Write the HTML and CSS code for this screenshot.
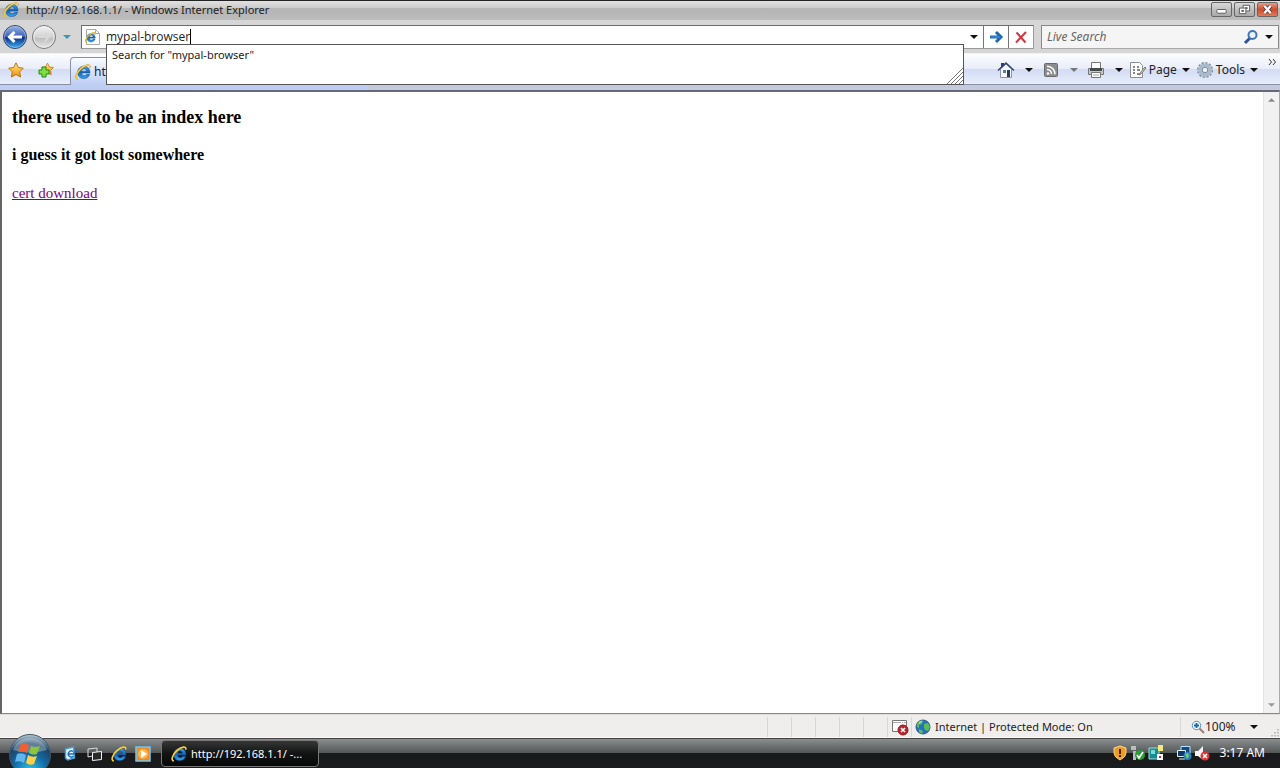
FILE: index.html
```html
<!DOCTYPE html>
<html lang="en">
<head>
<meta charset="utf-8">
<title>http://192.168.1.1/ - Windows Internet Explorer</title>
<link rel="stylesheet" href="styles.css">
</head>
<body>
<svg class="defs" aria-hidden="true">
  <defs>
    <linearGradient id="blue" x1="0" y1="0" x2="0" y2="1"><stop offset="0" stop-color="#3fa6e6"/><stop offset=".5" stop-color="#1565bd"/><stop offset="1" stop-color="#2fa8ea"/></linearGradient>
    <linearGradient id="back" x1="0" y1="0" x2="0" y2="1"><stop offset="0" stop-color="#9db6e8"/><stop offset=".48" stop-color="#3d62b8"/><stop offset=".52" stop-color="#072b85"/><stop offset="1" stop-color="#42b6f5"/></linearGradient>
    <linearGradient id="fwd" x1="0" y1="0" x2="0" y2="1"><stop offset="0" stop-color="#f4f4f4"/><stop offset=".5" stop-color="#d2d2d2"/><stop offset=".55" stop-color="#bdbdbd"/><stop offset="1" stop-color="#e9e9e9"/></linearGradient>
    <linearGradient id="gold" x1="0" y1="0" x2="0" y2="1"><stop offset="0" stop-color="#fff07a"/><stop offset="1" stop-color="#f28a10"/></linearGradient>
    <radialGradient id="orb" cx=".5" cy=".9" r=".9"><stop offset="0" stop-color="#35c9ee"/><stop offset=".45" stop-color="#126aa5"/><stop offset=".75" stop-color="#1d4568"/><stop offset="1" stop-color="#bcd0de"/></radialGradient>
  </defs>
  <symbol id="ie" viewBox="0 0 16 16">
    <path fill-rule="evenodd" d="M9 2.200c3.700 0 6 2.600 6 6.800H6.600c.2 1.700 1.200 2.600 2.700 2.600 1.100 0 1.900-.5 2.400-1.300h3c-.8 2.600-2.900 4.300-5.800 4.300-3.800 0-6.200-2.500-6.200-6.200S5.300 2.200 9 2.200zM6.700 7.200h4.800C11.300 5.700 10.400 4.900 9 4.900S6.900 5.800 6.700 7.200z" fill="url(#blue)" stroke="#0d4a96" stroke-width=".5"/>
    <path d="M2.800 15C-.4 14.600 1.400 8.500 6 4.500 10.200.8 15.700-.4 14.700 3.600" fill="none" stroke="#b98d1c" stroke-width="1.700"/>
    <path d="M2.800 15C-.4 14.600 1.400 8.500 6 4.500 10.200.8 15.700-.4 14.700 3.600" fill="none" stroke="#ffd640" stroke-width="1.200"/>
  </symbol>
  <symbol id="star" viewBox="0 0 16 16"><path d="M8 .8l2.300 4.700 5 .7-3.600 3.600.9 5.200L8 12.500 3.400 15l.9-5.200L.7 6.200l5-.7z" fill="url(#gold)" stroke="#b87716" stroke-linejoin="round"/></symbol>
  <symbol id="down" viewBox="0 0 8 4"><path d="M0 0h8L4 4z" fill="currentColor"/></symbol>
</svg>

<header class="titlebar">
  <svg class="i16"><use href="#ie"/></svg>
  <span class="window-title">http://192.168.1.1/ - Windows Internet Explorer</span>
  <div class="window-buttons">
    <button aria-label="Minimize"><svg viewBox="0 0 20 14"><rect x="5" y="7" width="10" height="4" rx="1" fill="#fff" stroke="#555"/></svg></button>
    <button aria-label="Restore"><svg viewBox="0 0 20 14"><path d="M8.500 2.500h7v6h-7zM11 5h2v1h-2z" fill="#fff" fill-rule="evenodd" stroke="#555"/><path d="M4.500 5.500h7v6h-7zM7 8h2v1H7z" fill="#fff" fill-rule="evenodd" stroke="#555"/></svg></button>
    <button class="close" aria-label="Close"><svg viewBox="0 0 20 14"><path d="M6.500 3l7 8M13.500 3l-7 8" stroke="#643030" stroke-width="4"/><path d="M6.500 3l7 8M13.500 3l-7 8" stroke="#fff" stroke-width="2.500"/></svg></button>
  </div>
</header>

<nav class="navbar">
  <div class="travel">
    <button aria-label="Back"><svg viewBox="0 0 26 26"><circle cx="13" cy="13" r="11.500" fill="url(#back)" stroke="#3a4660"/><circle cx="13" cy="13" r="10.500" fill="none" stroke="#a8c5ee" stroke-opacity=".6"/><path d="M20 13H8M12.500 8L7.500 13l5 5" fill="none" stroke="#fff" stroke-width="3"/></svg></button>
    <button aria-label="Forward"><svg viewBox="0 0 26 26"><circle cx="13" cy="13" r="11.500" fill="url(#fwd)" stroke="#777"/><circle cx="13" cy="13" r="10.200" fill="none" stroke="#eee"/><path d="M7 13h11M14 9l4 4-4 4" fill="none" stroke="#d8d8d8" stroke-width="2"/></svg></button>
    <button class="recent" aria-label="Recent pages"><svg class="down"><use href="#down"/></svg></button>
  </div>
  <div class="address">
    <svg class="page-icon" viewBox="0 0 18 18"><path d="M3.500 1.500h9l4 4v11h-13z" fill="#fff" stroke="#aaa"/><path d="M12.500 1.500v4h4" fill="none" stroke="#aaa"/><use href="#ie" x="2" y="4" width="11" height="11"/></svg>
    <input class="address-input" aria-label="Address" value="mypal-browser">
    <span class="caret"></span>
    <button class="address-drop" aria-label="Show addresses"><svg class="down"><use href="#down"/></svg></button>
    <button class="address-btn" aria-label="Go"><svg class="i16" viewBox="0 0 16 16"><path d="M2 8h10M8 3l5 5-5 5" fill="none" stroke="#1d68b0" stroke-width="3"/><path d="M3 8h9" stroke="#4b9ae0"/></svg></button>
    <button class="address-btn" aria-label="Stop"><svg class="i16" viewBox="0 0 16 16"><path d="M3.500 3.500l9 10M13 3L3 13.500" fill="none" stroke="#cf3942" stroke-width="2"/></svg></button>
    <div class="suggestions">
      <span>Search for "mypal-browser"</span>
      <svg class="grip" viewBox="0 0 16 16"><path d="M0 16L16 0M4 16L16 4M8 16l8-8M12 16l4-4" stroke="#777"/></svg>
    </div>
  </div>
  <div class="search">
    <input aria-label="Search" placeholder="Live Search">
    <button aria-label="Search the web"><svg class="i16" viewBox="0 0 16 16"><path d="M7 9l-5 5" stroke="#2d5597" stroke-width="3"/><circle cx="9.500" cy="6" r="4" fill="#e6f3ff" stroke="#4273b5" stroke-width="2"/></svg></button>
    <button aria-label="Search options"><svg class="down"><use href="#down"/></svg></button>
  </div>
</nav>

<div class="tabbar">
  <div class="favorites">
    <button aria-label="Favorites"><svg class="i16"><use href="#star"/></svg></button>
    <button aria-label="Add to favorites"><svg class="i16" viewBox="0 0 16 16"><use href="#star" x="3" y="0" width="13" height="14"/><path d="M4 5h4v3h3v4H8v3H4v-3H1V8h3z" fill="#7ee03c" stroke="#24881a"/></svg></button>
  </div>
  <button class="tab"><svg class="i16"><use href="#ie"/></svg><span>http://192.168.1.1/</span></button>
  <div class="commands">
    <button aria-label="Home"><svg class="i18" viewBox="0 0 18 18"><path d="M4 2h3v4H4z" fill="#293f78"/><path d="M3.500 8v8.500h11V8L9 3z" fill="#f5f7fb" stroke="#8a94ad"/><path d="M1 9.500L9 2l8 7.500" fill="none" stroke="#34477c" stroke-width="1.600"/><path d="M6 9h3v3H6z" fill="#52829a"/><path d="M10 9h3v7h-3z" fill="#243e5d"/></svg></button>
    <button class="menu" aria-label="Home menu"><svg class="down"><use href="#down"/></svg></button>
    <button aria-label="Feeds"><svg class="i16" viewBox="0 0 16 16"><rect x="1.500" y="1.500" width="13" height="13" rx="1" fill="#8d8d8d" stroke="#696969"/><circle cx="5" cy="11.500" r="1.300" fill="#fff"/><path d="M4 7.500a4.500 4.500 0 0 1 4.500 4.500M4 4.200a8 8 0 0 1 8 8" fill="none" stroke="#fff" stroke-width="1.600"/></svg></button>
    <button class="menu muted" aria-label="Feeds menu"><svg class="down"><use href="#down"/></svg></button>
    <button aria-label="Print"><svg class="i18" viewBox="0 0 18 18"><path d="M4.500 1.500h9v6h-9z" fill="#fff" stroke="#777"/><path d="M1.500 7.500h15v6h-15z" fill="#c5c8c8" stroke="#777"/><path d="M3 7h12v3H3z" fill="#454b4d"/><path d="M4.500 11.500h9v5h-9z" fill="#fff" stroke="#777"/><path d="M6 14h6" stroke="#aaa"/></svg></button>
    <button class="menu" aria-label="Print menu"><svg class="down"><use href="#down"/></svg></button>
    <button class="labelled"><svg class="i18" viewBox="0 0 18 18"><path d="M1.500 1.500h9l3 3v12h-12z" fill="#fff" stroke="#8b8f94"/><path d="M4 6h2M8 6h2M4 9h2M8 9h3M4 12h2M8 13h2" stroke="#58615d" stroke-width="1.500"/><path d="M16 6l-5 6-1 2 2-1 5-6z" fill="#d7dfb0" stroke="#777"/></svg><span>Page</span><svg class="down"><use href="#down"/></svg></button>
    <button class="labelled"><svg class="i18" viewBox="0 0 18 18"><circle cx="9" cy="9" r="7.200" fill="none" stroke="#7d8fa3" stroke-width="1.600" stroke-dasharray="2.300 1.470"/><circle cx="9" cy="9" r="5" fill="none" stroke="#a9bacb" stroke-width="3.500"/><circle cx="9" cy="9" r="2.800" fill="#eef3fa" stroke="#74869a"/></svg><span>Tools</span><svg class="down"><use href="#down"/></svg></button>
    <button class="more" aria-label="More"><svg viewBox="0 0 8 6"><path d="M1 0l2.500 3L1 6M5 0l2.500 3L5 6" fill="none" stroke="#333"/></svg></button>
  </div>
</div>
<div class="tab-edge"></div>

<div class="viewport">
  <main>
    <h3>there used to be an index here</h3>
    <h4>i guess it got lost somewhere</h4>
    <a href="#cert">cert download</a>
  </main>
  <div class="scrollbar"><svg viewBox="0 0 8 4"><path d="M0 4h8L4 0z" fill="#888"/></svg><svg viewBox="0 0 8 4"><path d="M0 0h8L4 4z" fill="#999"/></svg></div>
</div>

<footer class="status">
  <i></i><i></i><i></i><i></i><i></i>
  <span class="pane blocked"><svg class="i18" viewBox="0 0 18 18"><path d="M1.500 2.500h14v11h-14z" fill="#fff" stroke="#777"/><path d="M2 4.500h13" stroke="#aaa" stroke-dasharray="8 1 1 1"/><circle cx="12" cy="12" r="5" fill="#b9262c" stroke="#8a1a1d"/><path d="M10 10l4 4M14 10l-4 4" stroke="#fff" stroke-width="1.600"/></svg></span>
  <span class="pane zone"><svg class="i16" viewBox="0 0 16 16"><circle cx="8" cy="8" r="7" fill="#2671bd" stroke="#335b80"/><path d="M2 5c1-3 4-4 6-3l-1 3-3 1v3L2 8zM9 5l4-1 2 4-2 4-3-1-1-3zM4 10l4 2-1 3-3-2z" fill="#5cbf55"/><path d="M4 4l3-2" stroke="#c5efff"/></svg><span>Internet | Protected Mode: On</span></span>
  <button class="pane zoom"><svg class="i14" viewBox="0 0 14 14"><path d="M8 8l5 5" stroke="#9b8270" stroke-width="2"/><circle cx="5.500" cy="5.500" r="4.200" fill="#eef8ff" stroke="#6390bc"/><path d="M3 5.500h5M5.500 3v5" stroke="#1c66af" stroke-width="1.800"/></svg><span>100%</span><svg class="down"><use href="#down"/></svg></button>
  <svg class="corner" viewBox="0 0 10 10"><path d="M8 2v8M5 5v5M2 8v2" stroke="#aaa" stroke-width="1.500" stroke-dasharray="1.500 1.500"/></svg>
</footer>

<div class="taskbar">
  <button class="start" aria-label="Start"><svg viewBox="0 0 44 44"><circle cx="22" cy="22" r="20.500" fill="url(#orb)" stroke="#46545e"/><path d="M5 17a18 18 0 0 1 34 0q-17 5-34 0" fill="#fff" opacity=".3"/><path d="M13 11q4-2 8 1l-2 8q-4-3-9-1z" fill="#ee6030"/><path d="M23 13q4 2 9 0l-3 8q-4 2-8-1z" fill="#8cc43a"/><path d="M9 21q5-2 9 1l-2 8q-4-3-9-1z" fill="#63b5ee"/><path d="M20 22q4 3 9 1l-3 8q-4 2-8-1z" fill="#ffd044"/></svg></button>
  <div class="quick">
    <button aria-label="Launch"><svg class="i16" viewBox="0 0 16 16"><path d="M2.500 3l8-2 1 11-7 2-2-2z" fill="#eaf7ff" stroke="#4a9ed8" stroke-width="1.500"/><path d="M10 5.500a3 3 0 1 0 .5 4.500M5.500 8h5l3.500-5" fill="none" stroke="#1a6fb8" stroke-width="1.500"/></svg></button>
    <button aria-label="Switch windows"><svg class="i16" viewBox="0 0 16 16"><path d="M1 3l9-1v7l-9 2z" fill="none" stroke="#ddd"/><path d="M5.500 6.500l9-1v8l-9 1z" fill="#292b2b" stroke="#f5f5f5"/></svg></button>
    <button aria-label="Internet Explorer"><svg class="i16"><use href="#ie"/></svg></button>
    <button aria-label="Media Player"><svg class="i16" viewBox="0 0 16 16"><rect x="1" y="1" width="14" height="14" fill="#f28b20" stroke="#72c8f2" stroke-width="1.500"/><circle cx="8" cy="8" r="5" fill="#ffb551"/><path d="M6 4l6 4-6 4z" fill="#fff"/></svg></button>
  </div>
  <button class="task"><svg class="i16"><use href="#ie"/></svg><span>http://192.168.1.1/ -...</span></button>
  <div class="tray">
    <svg class="i16" viewBox="0 0 16 16"><path d="M8 1l6 2v5q0 4-6 7-6-3-6-7V3z" fill="#ed9d24" stroke="#fbd68a"/><path d="M8 4v5M8 10v2" stroke="#472407" stroke-width="2"/></svg>
    <svg class="i16" viewBox="0 0 16 16"><path d="M1 1h5v4H1zM3 6h3v9H3z" fill="#b9bec0"/><circle cx="10" cy="10" r="5" fill="#299c38"/><path d="M7 10l2 3 4-6" fill="none" stroke="#fff" stroke-width="1.600"/></svg>
    <svg class="i16" viewBox="0 0 16 16"><path d="M1 3h10v11H1z" fill="#168c92" stroke="#a5dcd8"/><path d="M3 5h4v4H3z" fill="#77dcd9"/><path d="M10 0h5v6h-5z" fill="#f1e985"/><path d="M9 9h6v6H9z" fill="#fff"/><path d="M11 11h2v2h-2z" fill="#c33"/></svg>
    <svg class="i16 network" viewBox="0 0 16 16"><path d="M5 1.500h9v7H5z" fill="#12497f" stroke="#b8e2ff"/><path d="M1.500 5.500h8v6h-8zM3 14h6" fill="#0d3969" stroke="#e0f2ff"/><circle cx="11.500" cy="11" r="4" fill="#2a7fc4"/><path d="M9 9l3-1 1 3-2 3z" fill="#70ca60"/></svg>
    <svg class="i16" viewBox="0 0 16 16"><path d="M1 6h3l5-5v14l-5-4H1z" fill="#f4f4f4"/><circle cx="11" cy="11" r="4.500" fill="#d93335"/><path d="M9 9l4 4M13 9l-4 4" stroke="#fff" stroke-width="1.500"/></svg>
    <time>3:17 AM</time>
  </div>
</div>
</body>
</html>
```

FILE: styles.css
```css
* { box-sizing: border-box; }
body {
  margin: 0;
  height: 100vh;
  display: flex;
  flex-direction: column;
  overflow: hidden;
  font: 12px/16px "Noto Sans", "Open Sans", sans-serif;
  color: #222;
  background: #d6d6d6;
}
button, input { font: inherit; color: inherit; padding: 0; margin: 0; border: 0; background: none; outline: 0; border-radius: 0; }
button { display: flex; align-items: center; justify-content: center; }
svg { display: block; flex: none; }
.defs { position: absolute; width: 0; height: 0; }
.i14 { width: 14px; height: 14px; }
.i16 { width: 16px; height: 16px; }
.i18 { width: 18px; height: 18px; }
.down { width: 8px; height: 4px; color: #111; }

.titlebar {
  flex: none;
  height: 20px;
  display: flex;
  align-items: center;
  gap: 7px;
  padding: 0 2px 2px 3px;
  border-top: 1px solid #222;
  background: linear-gradient(#e1e1e1, #cdcdcd 35%, #b5b5b5 40%, #bcbcbc);
  font-size: 11px;
}
.window-title { flex: 1; }
.window-buttons { display: flex; gap: 2px; }
.window-buttons button { width: 21px; height: 15px; border: 1px solid #666; border-radius: 2px; background: linear-gradient(#d8d8d8, #a9a9a9); }
.window-buttons svg { width: 19px; height: 13px; }
.window-buttons .close { background: linear-gradient(#e3a08c, #c94d30 50%, #e27b55); }

.navbar { flex: none; height: 33px; display: flex; align-items: center; gap: 7px; padding: 0 1px 0 2px; }
.travel { display: flex; align-items: center; gap: 3px; width: 72px; }
.travel svg:not(.down) { width: 26px; height: 26px; }
.recent { width: 14px; height: 20px; }
.recent .down { color: #3c96bc; }
.address { position: relative; flex: 1; height: 24px; display: flex; align-items: center; border: 1px solid #8a8a8a; border-color: #6c6c6c #999 #999 #6c6c6c; background: #fff; }
.page-icon { width: 18px; height: 18px; margin: 0 5px 0 1px; }
.address-input { field-sizing: content; height: 20px; font-family: "Open Sans", "Noto Sans", sans-serif; }
.caret { width: 1px; height: 15px; background: #000; }
.address-drop { margin-left: auto; width: 18px; height: 22px; }
.address-btn { width: 25px; height: 22px; border-left: 1px solid #777; }
.suggestions {
  position: absolute;
  z-index: 2;
  top: 18px;
  left: 24px;
  right: 69px;
  height: 41px;
  padding: 2px 5px;
  border: 1px solid #555;
  background: #fff;
  font-size: 11px;
}
.grip { position: absolute; right: 0; bottom: 0; width: 16px; height: 16px; }
.search { width: 238px; height: 24px; display: flex; align-items: center; border: 1px solid #888; border-bottom-color: #aaa; background: #f5f5f5; }
.search input { flex: 1; min-width: 0; padding-left: 5px; font-style: italic; }
.search input::placeholder { color: #666; opacity: 1; }
.search button { width: 18px; height: 22px; }

.tabbar { flex: none; height: 32px; display: flex; border-top: 1px solid #f2f2f2; background: linear-gradient(#fdfdff, #e9edf9 47%, #d3dcf3 50%, #e8effc); }
.favorites { width: 70px; display: flex; align-items: center; gap: 14px; padding: 2px 0 0 8px; border-bottom: 1px solid #8990a8; }
.tab { width: 298px; justify-content: flex-start; gap: 3px; margin-top: 3px; padding-left: 4px; border: 1px solid #888fa5; border-bottom: 0; border-radius: 4px 4px 0 0; background: linear-gradient(#fafcff, #dbe5fa 45%, #becff5); color: #17135e; }
.commands { flex: 1; display: flex; align-items: center; justify-content: flex-end; border-bottom: 1px solid #8990a8; padding: 2px 4px 0 0; }
.commands > button { min-width: 25px; height: 26px; }
.commands > .menu { min-width: 20px; }
.commands .muted .down { color: #777; }
.commands > .labelled { gap: 2px; padding-right: 6px; }
.labelled .down { margin-left: 3px; }
.commands > .more { min-width: 12px; align-self: flex-start; height: 12px; justify-content: flex-end; }
.more svg { width: 8px; height: 6px; }
.tab-edge { flex: none; height: 5px; background: linear-gradient(90deg, #bdcdf3 368px, #c5c9dc 368px); }

.viewport { flex: 1; min-height: 0; display: flex; border: 2px solid #62646c; border-width: 2px 1px 1px 2px; border-color: #666979 #aaa #888 #666; background: #fff; }
main { flex: 1; padding: 15px 10px; font: 15px/20px "Liberation Serif", "Times New Roman", serif; color: #000; }
h3 { margin: 0 0 18px; font-size: 18px; line-height: 20px; }
h4 { margin: 0 0 18px; font-size: 16px; line-height: 20px; }
main a { color: #800080; }
.scrollbar { width: 16px; display: flex; flex-direction: column; justify-content: space-between; align-items: center; padding: 6px 0; background: #f1f1f1; border-left: 1px solid #e3e3e3; }
.scrollbar svg { width: 7px; height: 4px; }

.status { flex: none; height: 24px; display: flex; align-items: stretch; justify-content: flex-end; padding-top: 2px; border-top: 1px solid #ddd; border-bottom: 1px solid #f8f8f8; background: #f0eeed; font-size: 11px; }
.status i { width: 24px; border-left: 1px solid #d8d6d5; }
.pane { display: flex; align-items: center; border-left: 1px solid #dad8d7; }
.blocked { width: 24px; padding-left: 3px; }
.zone { width: 269px; gap: 4px; padding-left: 3px; }
.zoom { width: 90px; justify-content: flex-start; padding-left: 10px; font-size: 12px; }
.zoom .down { margin-left: 14px; }
.corner { width: 10px; height: 10px; align-self: flex-end; }

.taskbar { flex: none; height: 30px; display: flex; align-items: center; border-top: 1px solid #444; background: linear-gradient(#8b8e8e, #555858 47%, #18191a 50%, #1b1c1d); color: #fff; }
.start { width: 60px; height: 30px; align-items: flex-start; }
.start svg { width: 44px; height: 44px; margin-top: -6px; }
.quick { display: flex; gap: 8px; width: 101px; padding-left: 3px; }
.task { width: 158px; height: 27px; justify-content: flex-start; gap: 4px; padding-left: 9px; border: 1px solid #777; border-radius: 4px; background: linear-gradient(#363838, #121313 50%, #070808); white-space: nowrap; font-size: 11px; }
.tray { margin-left: auto; display: flex; align-items: center; gap: 2px; padding: 0 15px 2px 0; }
.network { margin-left: 10px; }
.tray time { margin-left: 8px; }
```
